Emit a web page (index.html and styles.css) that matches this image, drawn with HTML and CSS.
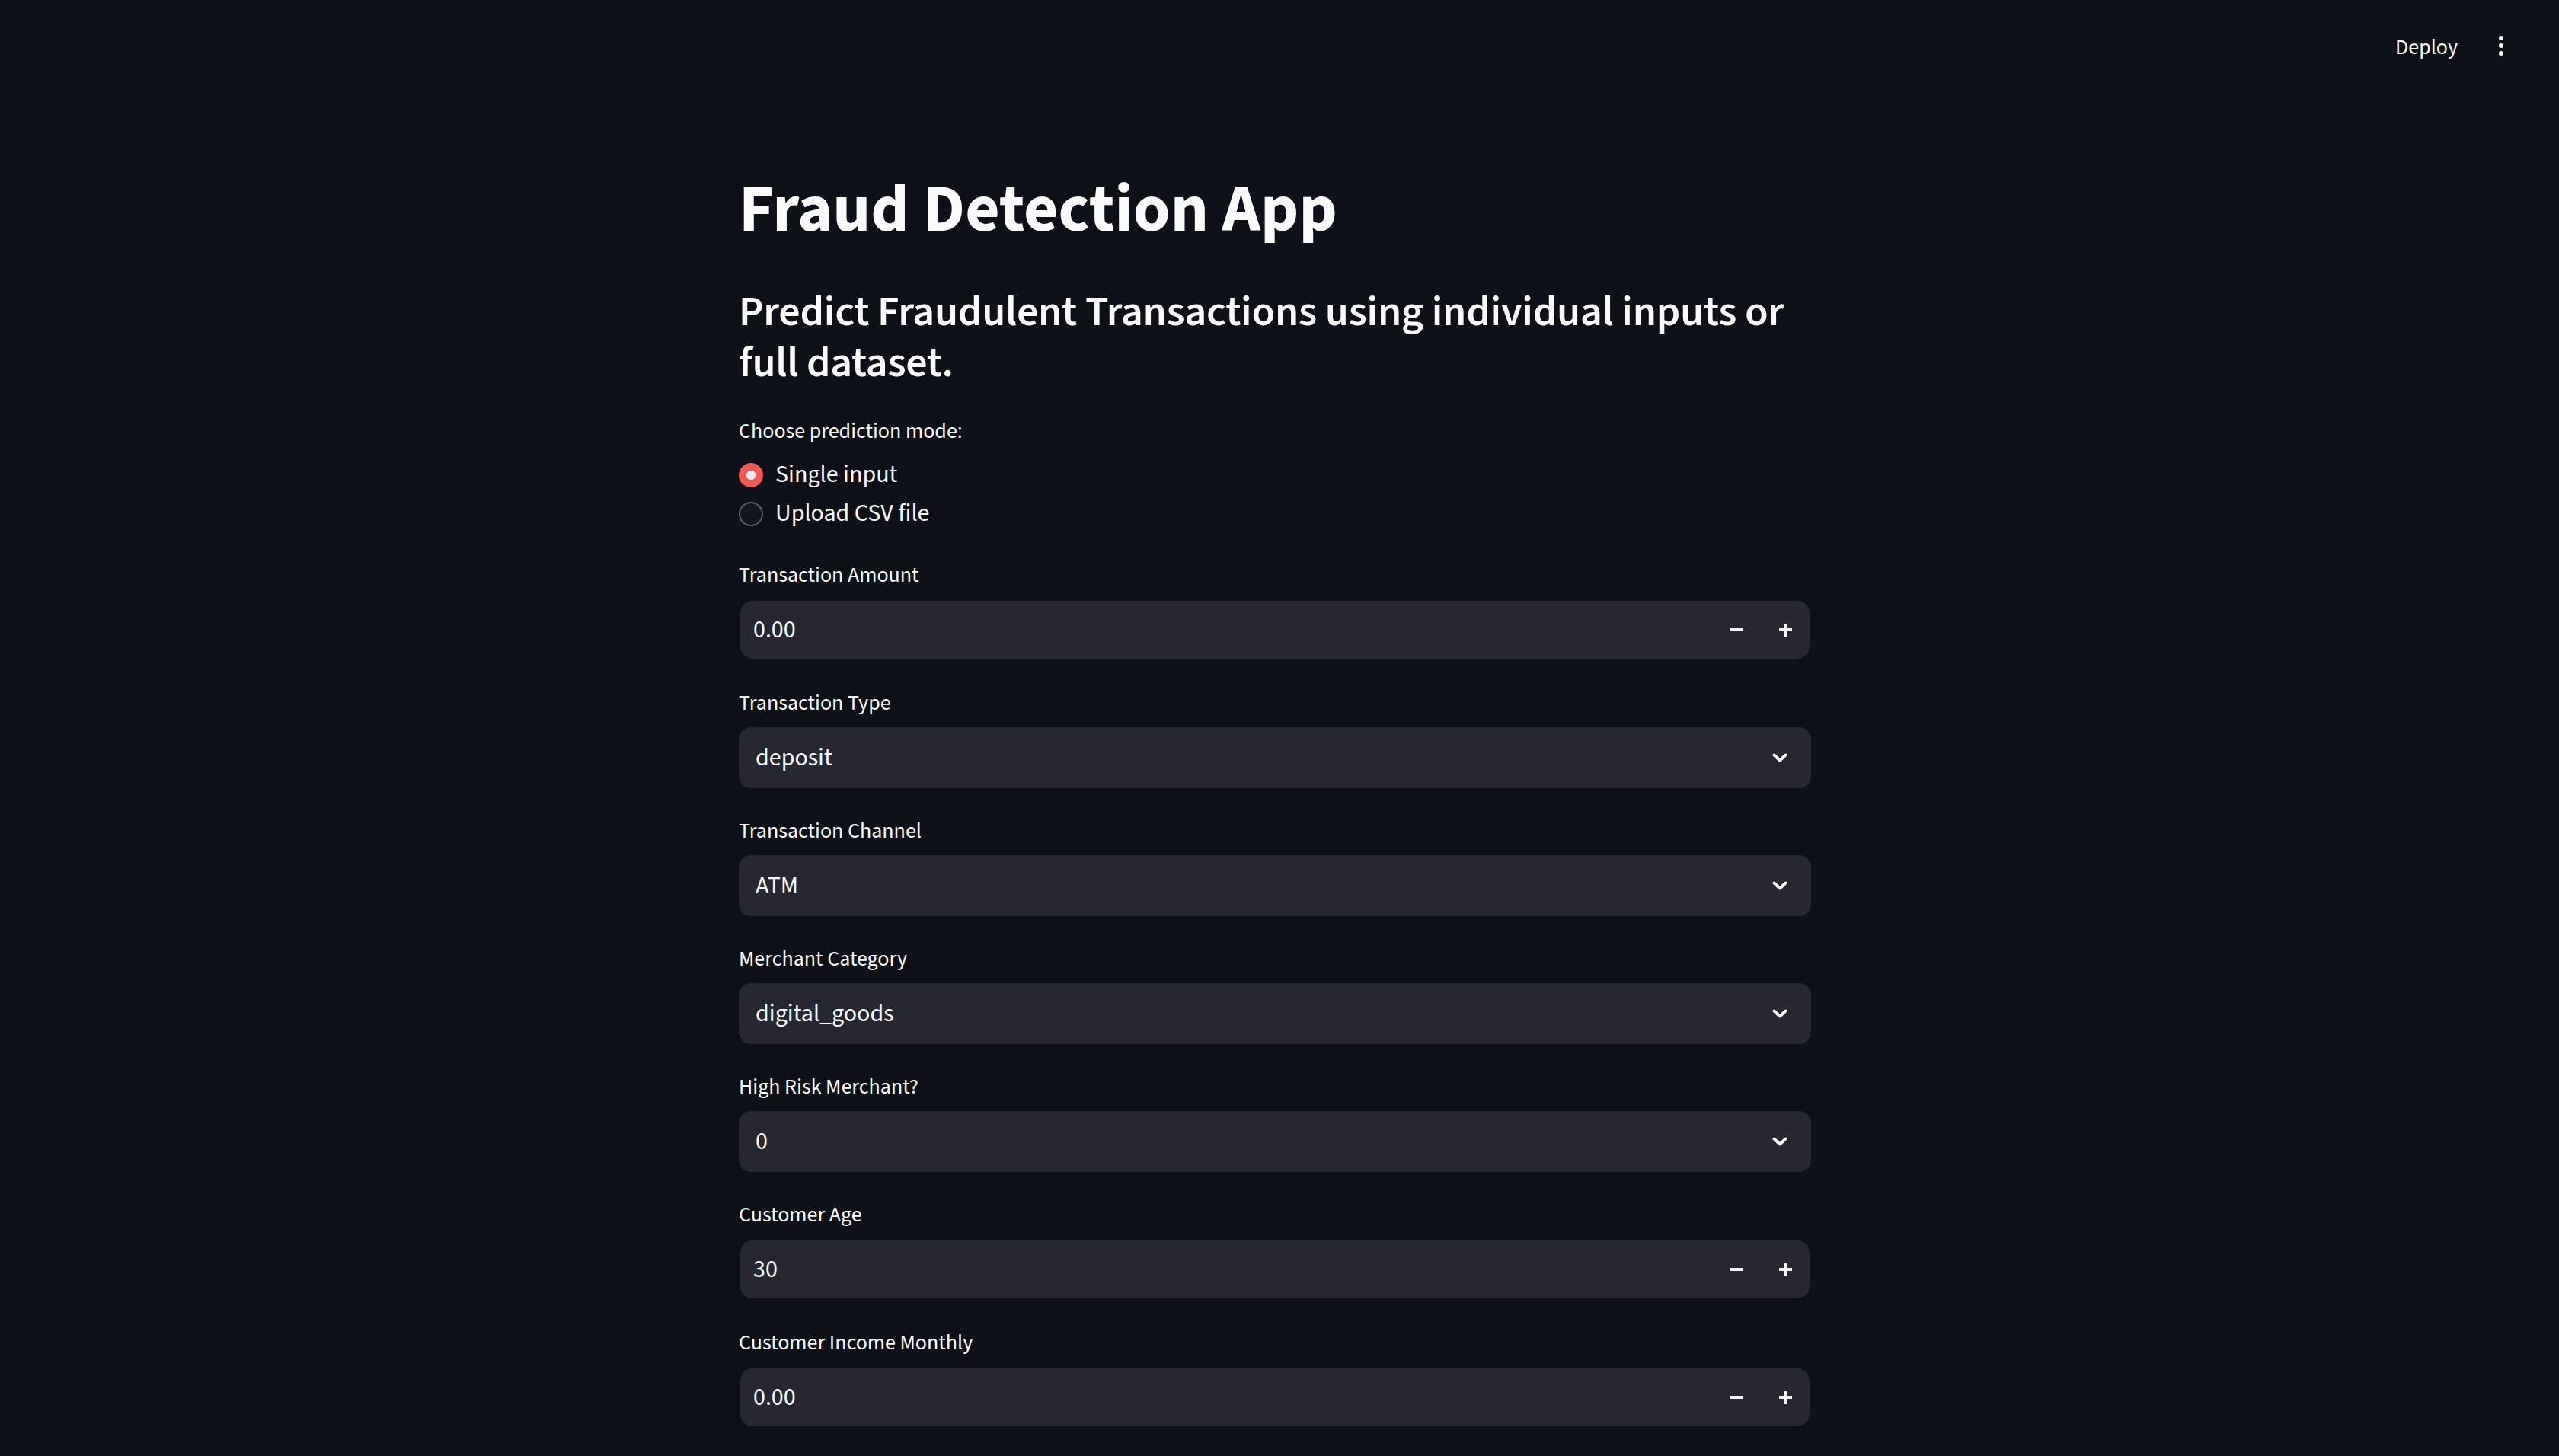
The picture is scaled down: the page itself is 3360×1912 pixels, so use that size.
FILE: index.html
```html
<!DOCTYPE html>
<html lang="en">
<head>
<meta charset="utf-8">
<title>Fraud Detection App</title>
<link rel="stylesheet" href="styles.css">
</head>
<body>
<div class="app">
  <header class="header">
    <span class="deploy">Deploy</span>
    <span class="kebab"><i></i><i></i><i></i></span>
  </header>
  <main class="main">
    <h1 class="title">Fraud Detection App</h1>
    <h3 class="subtitle">Predict Fraudulent Transactions using individual inputs or full dataset.</h3>
    <div class="radio-group">
      <div class="field-label">Choose prediction mode:</div>
      <div class="radio-row"><span class="radio checked"></span><span>Single input</span></div>
      <div class="radio-row"><span class="radio"></span><span>Upload CSV file</span></div>
    </div>
    <div class="widgets">
      <div class="widget">
        <div class="field-label">Transaction Amount</div>
        <div class="num"><div class="num-box"><span class="value">0.00</span><span class="step"><span class="minus"></span></span><span class="step"><span class="plus"></span></span></div></div>
      </div>
      <div class="widget">
        <div class="field-label">Transaction Type</div>
        <div class="select"><span class="value">deposit</span><svg class="chev" width="20" height="12" viewBox="0 0 20 12"><path d="M2.5 2.5 L10 9.5 L17.5 2.5" fill="none" stroke="#fafafa" stroke-width="4" stroke-linecap="round" stroke-linejoin="round"/></svg></div>
      </div>
      <div class="widget">
        <div class="field-label">Transaction Channel</div>
        <div class="select"><span class="value">ATM</span><svg class="chev" width="20" height="12" viewBox="0 0 20 12"><path d="M2.5 2.5 L10 9.5 L17.5 2.5" fill="none" stroke="#fafafa" stroke-width="4" stroke-linecap="round" stroke-linejoin="round"/></svg></div>
      </div>
      <div class="widget">
        <div class="field-label">Merchant Category</div>
        <div class="select"><span class="value">digital_goods</span><svg class="chev" width="20" height="12" viewBox="0 0 20 12"><path d="M2.5 2.5 L10 9.5 L17.5 2.5" fill="none" stroke="#fafafa" stroke-width="4" stroke-linecap="round" stroke-linejoin="round"/></svg></div>
      </div>
      <div class="widget">
        <div class="field-label">High Risk Merchant?</div>
        <div class="select"><span class="value">0</span><svg class="chev" width="20" height="12" viewBox="0 0 20 12"><path d="M2.5 2.5 L10 9.5 L17.5 2.5" fill="none" stroke="#fafafa" stroke-width="4" stroke-linecap="round" stroke-linejoin="round"/></svg></div>
      </div>
      <div class="widget">
        <div class="field-label">Customer Age</div>
        <div class="num"><div class="num-box"><span class="value">30</span><span class="step"><span class="minus"></span></span><span class="step"><span class="plus"></span></span></div></div>
      </div>
      <div class="widget">
        <div class="field-label">Customer Income Monthly</div>
        <div class="num"><div class="num-box"><span class="value">0.00</span><span class="step"><span class="minus"></span></span><span class="step"><span class="plus"></span></span></div></div>
      </div>
    </div>
  </main>
</div>
</body>
</html>
```
FILE: styles.css
```css
* { box-sizing: border-box; }
html, body {
  margin: 0;
  padding: 0;
  background: #0e1117;
  color: #fafafa;
  font-family: "Source Sans Pro", "Source Sans 3", Lato, sans-serif;
  font-variant-ligatures: none;
}
.app { min-height: 1912px; }

.header {
  height: 120px;
  display: flex;
  justify-content: flex-end;
  align-items: center;
  padding: 3px 60px 0 0;
}
.deploy {
  font-size: 28px;
  margin-right: 41px;
}
.kebab {
  width: 32px;
  display: flex;
  flex-direction: column;
  align-items: center;
  gap: 4px;
  margin-top: -3px;
}
.kebab i {
  display: block;
  width: 6px;
  height: 6px;
  border-radius: 50%;
  background: #fafafa;
}

.main {
  width: 1408px;
  margin-left: calc(50% - 710px);
  padding-bottom: 80px;
}
.title {
  margin: 103px 0 0;
  font-size: 88px;
  line-height: 106px;
  font-weight: 700;
}
.subtitle {
  margin: 47px 0 0;
  font-size: 56px;
  line-height: 67px;
  font-weight: 600;
  letter-spacing: -0.005em;
}
.field-label {
  font-size: 28px;
  line-height: 48px;
  height: 48px;
}
.radio-group { margin-top: 32px; }
.radio-row {
  display: flex;
  align-items: center;
  height: 48px;
  font-size: 32px;
  margin-top: 3px;
}
.radio-group .field-label { margin-bottom: 9px; }
.radio {
  width: 32px;
  height: 32px;
  border-radius: 50%;
  border: 2px solid #5c5e68;
  background: #14161e;
  margin: 1px 16px 0 0;
  flex: none;
}
.radio.checked {
  border: none;
  background: radial-gradient(circle, #e9eaf0 0 6px, #ef5a55 6.5px);
}

.widgets {
  margin-top: 33px;
  display: flex;
  flex-direction: column;
  gap: 32px;
}
.widget .field-label { margin-bottom: 8px; }
.value { font-size: 32px; }

.num { height: 80px; padding: 2px; }
.num-box {
  height: 76px;
  background: #262730;
  border-radius: 16px;
  display: flex;
  align-items: center;
  padding-left: 17px;
}
.num-box .value { flex: 1; }
.step {
  width: 64px;
  height: 100%;
  display: flex;
  align-items: center;
  justify-content: center;
}
.minus, .plus {
  position: relative;
  width: 17px;
  height: 17px;
  display: block;
}
.minus::before, .plus::before, .plus::after {
  content: "";
  position: absolute;
  background: #fafafa;
}
.minus::before, .plus::before {
  left: 0; right: 0; top: 6.5px; height: 4px;
}
.plus::after {
  top: 0; bottom: 0; left: 6.5px; width: 4px;
}

.select {
  height: 80px;
  background: #262730;
  border-radius: 16px;
  display: flex;
  align-items: center;
  padding: 0 31px 0 22px;
}
.select .value { flex: 1; }
.chev { flex: none; }
```
